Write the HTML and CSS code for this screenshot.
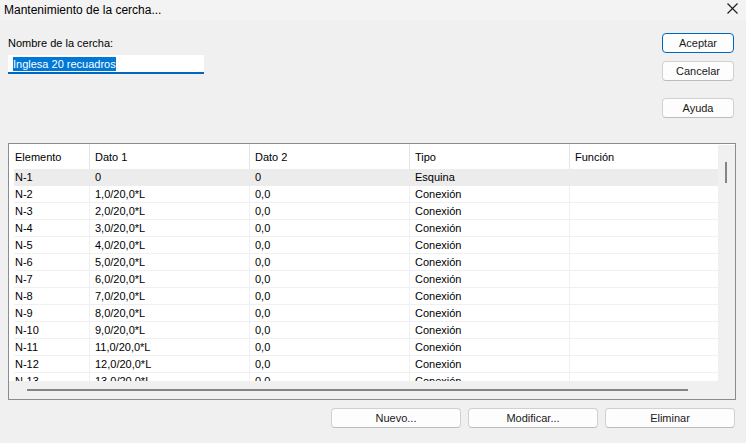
FILE: index.html
```html
<!DOCTYPE html>
<html lang="es">
<head>
<meta charset="utf-8">
<title>Mantenimiento de la cercha</title>
<link rel="stylesheet" href="styles.css">
</head>
<body>
<div class="dialog">
  <div class="titlebar">
    <span class="title">Mantenimiento de la cercha...</span>
    <svg class="close" width="12" height="12" viewBox="0 0 12 12"><path d="M0.5 0.5 L10.5 10.5 M10.5 0.5 L0.5 10.5" stroke="#1a1a1a" stroke-width="1.1" fill="none"/></svg>
  </div>
  <div class="top">
    <div class="namebox">
      <div class="label">Nombre de la cercha:</div>
      <div class="input"><span class="sel">Inglesa 20 recuadros</span></div>
    </div>
    <div class="sidebtns">
      <div class="btn default">Aceptar</div>
      <div class="btn">Cancelar</div>
      <div class="btn help">Ayuda</div>
    </div>
  </div>
  <div class="panel">
    <div class="listarea">
      <div class="header">
        <div class="hc c1">Elemento</div>
        <div class="hc">Dato 1</div>
        <div class="hc">Dato 2</div>
        <div class="hc">Tipo</div>
        <div class="hc">Función</div>
      </div>
      <div class="rows">
        <div class="row selected"><div class="cell c1">N-1</div><div class="cell">0</div><div class="cell">0</div><div class="cell">Esquina</div><div class="cell"></div></div>
        <div class="row"><div class="cell c1">N-2</div><div class="cell">1,0/20,0*L</div><div class="cell">0,0</div><div class="cell">Conexión</div><div class="cell"></div></div>
        <div class="row"><div class="cell c1">N-3</div><div class="cell">2,0/20,0*L</div><div class="cell">0,0</div><div class="cell">Conexión</div><div class="cell"></div></div>
        <div class="row"><div class="cell c1">N-4</div><div class="cell">3,0/20,0*L</div><div class="cell">0,0</div><div class="cell">Conexión</div><div class="cell"></div></div>
        <div class="row"><div class="cell c1">N-5</div><div class="cell">4,0/20,0*L</div><div class="cell">0,0</div><div class="cell">Conexión</div><div class="cell"></div></div>
        <div class="row"><div class="cell c1">N-6</div><div class="cell">5,0/20,0*L</div><div class="cell">0,0</div><div class="cell">Conexión</div><div class="cell"></div></div>
        <div class="row"><div class="cell c1">N-7</div><div class="cell">6,0/20,0*L</div><div class="cell">0,0</div><div class="cell">Conexión</div><div class="cell"></div></div>
        <div class="row"><div class="cell c1">N-8</div><div class="cell">7,0/20,0*L</div><div class="cell">0,0</div><div class="cell">Conexión</div><div class="cell"></div></div>
        <div class="row"><div class="cell c1">N-9</div><div class="cell">8,0/20,0*L</div><div class="cell">0,0</div><div class="cell">Conexión</div><div class="cell"></div></div>
        <div class="row"><div class="cell c1">N-10</div><div class="cell">9,0/20,0*L</div><div class="cell">0,0</div><div class="cell">Conexión</div><div class="cell"></div></div>
        <div class="row"><div class="cell c1">N-11</div><div class="cell">11,0/20,0*L</div><div class="cell">0,0</div><div class="cell">Conexión</div><div class="cell"></div></div>
        <div class="row"><div class="cell c1">N-12</div><div class="cell">12,0/20,0*L</div><div class="cell">0,0</div><div class="cell">Conexión</div><div class="cell"></div></div>
        <div class="row"><div class="cell c1">N-13</div><div class="cell">13,0/20,0*L</div><div class="cell">0,0</div><div class="cell">Conexión</div><div class="cell"></div></div>
      </div>
    </div>
    <div class="vscroll"><div class="vthumb"></div></div>
    <div class="hscroll"><div class="hthumb"></div></div>
    <div class="corner"></div>
  </div>
  <div class="bottom">
    <div class="btn wide">Nuevo...</div>
    <div class="btn wide">Modificar...</div>
    <div class="btn wide">Eliminar</div>
  </div>
</div>
</body>
</html>
```
FILE: styles.css
```css
* { box-sizing: border-box; }
html, body { margin: 0; padding: 0; }
body {
  background: #f0f0f0;
  font-family: "Liberation Sans", Arial, sans-serif;
  font-size: 11px;
  color: #000;
  width: 746px;
  height: 443px;
  overflow: hidden;
}
.dialog { width: 746px; height: 443px; display: flex; flex-direction: column; }
.titlebar {
  height: 20px;
  background: #f3f3f3;
  display: flex;
  align-items: center;
  justify-content: space-between;
  padding: 0 7px 0 4px;
}
.title { font-size: 12px; color: #000; line-height: 14px; }
.close { display: block; margin-top: -2px; }
.top {
  height: 123px;
  display: flex;
  justify-content: space-between;
  padding: 0 12px 0 8px;
}
.namebox { padding-top: 16px; }
.label { line-height: 14px; height: 14px; }
.input {
  margin-top: 5px;
  width: 196px;
  height: 19px;
  background: #fff;
  border-bottom: 2px solid #0067c0;
  padding: 2px 0 0 5px;
}
.sel {
  display: inline-block;
  background: #0078d7;
  color: #fff;
  line-height: 14px;
  height: 14px;
  padding: 0;
}
.sidebtns {
  padding-top: 13px;
  display: flex;
  flex-direction: column;
  gap: 8px;
}
.btn {
  height: 20px;
  background: #fdfdfd;
  border: 1px solid #d0d0d0;
  border-bottom-color: #bcbcbc;
  border-radius: 4px;
  display: flex;
  align-items: center;
  justify-content: center;
  width: 72px;
  color: #1a1a1a;
  line-height: 14px;
}
.btn.default { border: 1px solid #0067c0; }
.btn.help { margin-top: 9px; }
.panel {
  margin-left: 8px;
  width: 728px;
  height: 257px;
  border: 1px solid #8c8c8c;
  display: grid;
  grid-template-columns: 709px 17px;
  grid-template-rows: 237px 18px;
  background: #fff;
}
.listarea { overflow: hidden; background: #fff; }
.header {
  height: 25px;
  display: flex;
  white-space: nowrap;
}
.hc {
  flex: 0 0 160px;
  border-right: 1px solid #e5e5e5;
  padding-left: 5px;
  line-height: 26px;
}
.hc.c1 { flex-basis: 81px; padding-left: 6px; }
.rows { margin-left: 5px; }
.row {
  display: flex;
  height: 17px;
  white-space: nowrap;
  border-bottom: 1px solid #f0f0f0;
}
.row.selected { background: #ececec; border-bottom-color: #ececec; }
.cell {
  flex: 0 0 160px;
  border-left: 1px solid #f0f0f0;
  padding-left: 5px;
  line-height: 17px;
}
.row.selected .cell { border-left-color: #ececec; }
.cell.c1 { flex-basis: 75px; border-left: 0; padding-left: 1px; }
.vscroll {
  background: #f0f0f0;
  margin-top: 1px;
  padding: 17px 0 0 7px;
}
.vthumb { width: 2px; height: 21px; background: #858585; }
.hscroll {
  background: #f0f0f0;
  padding: 8px 0 0 18px;
}
.hthumb { width: 661px; height: 2px; background: #858585; }
.corner { background: #f0f0f0; }
.bottom {
  margin-top: 8px;
  display: flex;
  justify-content: flex-end;
  gap: 7px;
  padding-right: 11px;
}
.btn.wide { width: 130px; }
```
